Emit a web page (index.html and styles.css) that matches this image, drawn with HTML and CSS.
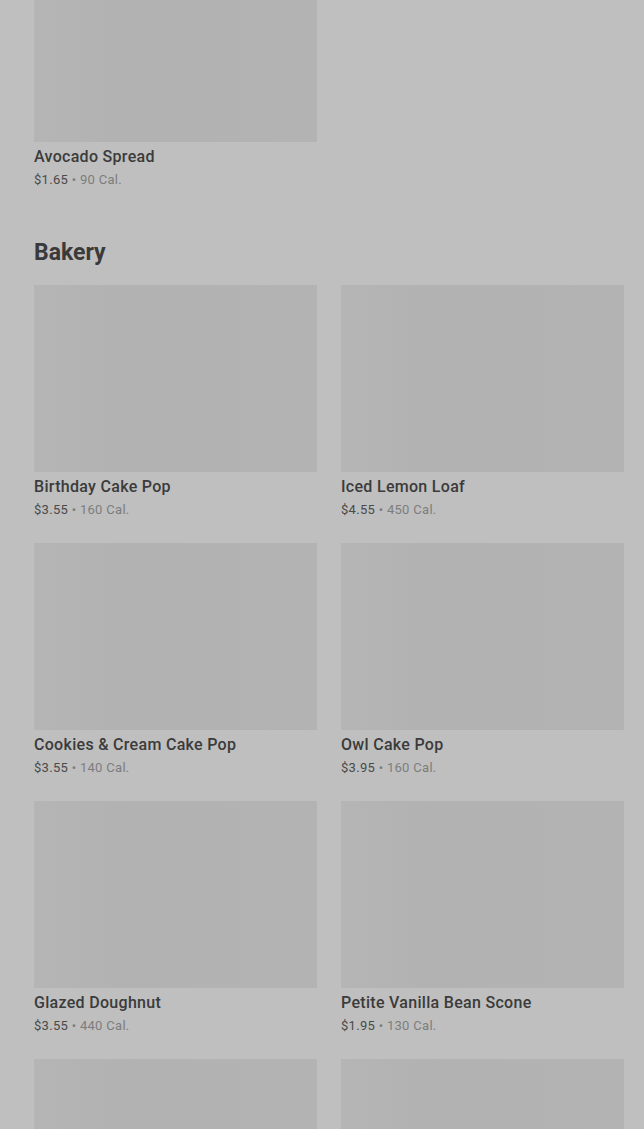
FILE: index.html
```html
<!DOCTYPE html>
<html lang="en">
<head>
    <meta charset="UTF-8">
    <meta name="viewport" content="width=device-width, initial-scale=1.0">
    <title>Menu</title>
    <link rel="stylesheet" href="styles.css">
</head>
<body>

    <div class="menu">
        <!-- Spreads (scrolled) -->
        <div class="category first">
            <div class="grid">
                <div class="item">
                    <div class="thumb"></div>
                    <div class="name">Avocado Spread</div>
                    <div class="meta"><span class="price">$1.65</span> • <span class="cal">90 Cal.</span></div>
                </div>
            </div>
        </div>

        <!-- Bakery -->
        <div class="category">
            <h2>Bakery</h2>
            <div class="grid">
                <div class="item">
                    <div class="thumb"></div>
                    <div class="name">Birthday Cake Pop</div>
                    <div class="meta"><span class="price">$3.55</span> • <span class="cal">160 Cal.</span></div>
                </div>
                <div class="item">
                    <div class="thumb"></div>
                    <div class="name">Iced Lemon Loaf</div>
                    <div class="meta"><span class="price">$4.55</span> • <span class="cal">450 Cal.</span></div>
                </div>
                <div class="item">
                    <div class="thumb"></div>
                    <div class="name">Cookies &amp; Cream Cake Pop</div>
                    <div class="meta"><span class="price">$3.55</span> • <span class="cal">140 Cal.</span></div>
                </div>
                <div class="item">
                    <div class="thumb"></div>
                    <div class="name">Owl Cake Pop</div>
                    <div class="meta"><span class="price">$3.95</span> • <span class="cal">160 Cal.</span></div>
                </div>
                <div class="item">
                    <div class="thumb"></div>
                    <div class="name">Glazed Doughnut</div>
                    <div class="meta"><span class="price">$3.55</span> • <span class="cal">440 Cal.</span></div>
                </div>
                <div class="item">
                    <div class="thumb"></div>
                    <div class="name">Petite Vanilla Bean Scone</div>
                    <div class="meta"><span class="price">$1.95</span> • <span class="cal">130 Cal.</span></div>
                </div>
                <!-- next row, below the fold -->
                <div class="item">
                    <div class="thumb"></div>
                </div>
                <div class="item">
                    <div class="thumb"></div>
                </div>
            </div>
        </div>
    </div>

</body>
</html>
```

FILE: styles.css
```css
body {
    margin: 0;
    padding: 0;
    background-color: #bfbfbf;
    font-family: Roboto, "Liberation Sans", sans-serif;
    color: #3b3b3b;
    height: 1129px;
    overflow: hidden;
}

.menu {
    padding: 0 20px 0 34px;
}

.category {
    margin-top: 50px;
}

.category.first {
    margin-top: -45px;
}

h2 {
    margin: 0 0 18px;
    font-size: 23px;
    line-height: 28px;
    font-weight: 700;
    color: #3a3a3a;
}

.grid {
    display: grid;
    grid-template-columns: 283px 283px;
    column-gap: 24px;
    row-gap: 24px;
}

.thumb {
    height: 187px;
    background: linear-gradient(90deg, #b5b5b5 0%, #b2b2b2 30%, #b3b3b3 100%);
}

.name {
    margin-top: 5px;
    font-size: 16px;
    line-height: 20px;
    font-weight: 500;
    letter-spacing: 0.3px;
    color: #3b3b3b;
}

.meta {
    margin-top: 4px;
    font-size: 13px;
    line-height: 18px;
    letter-spacing: 0.3px;
    color: #7d7d7d;
}

.price {
    color: #4a4a4a;
}

.cal {
    color: #7d7d7d;
}
```
